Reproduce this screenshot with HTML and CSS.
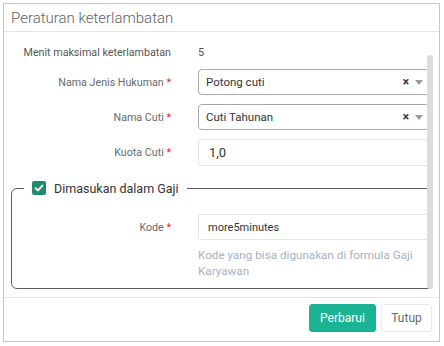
FILE: index.html
```html
<!DOCTYPE html>
<html lang="id">
<head>
    <meta charset="UTF-8">
    <meta name="viewport" content="width=device-width, initial-scale=1.0">
    <title>Peraturan keterlambatan</title>
    <link rel="stylesheet" href="styles.css">
</head>
<body>
    <div class="modal">
        <div class="modal-header">
            <h4 class="modal-title">Peraturan keterlambatan</h4>
        </div>
        <div class="modal-body">
            <div class="scroll-thumb"></div>
            <div class="form-row row-static">
                <label class="form-label">Menit maksimal keterlambatan</label>
                <div class="form-static">5</div>
            </div>
            <div class="form-row">
                <label class="form-label">Nama Jenis Hukuman <span class="req">*</span></label>
                <div class="select">
                    <span class="select-text">Potong cuti</span>
                    <span class="select-clear">&times;</span>
                    <span class="select-arrow"></span>
                </div>
            </div>
            <div class="form-row">
                <label class="form-label">Nama Cuti <span class="req">*</span></label>
                <div class="select">
                    <span class="select-text">Cuti Tahunan</span>
                    <span class="select-clear">&times;</span>
                    <span class="select-arrow"></span>
                </div>
            </div>
            <div class="form-row">
                <label class="form-label">Kuota Cuti <span class="req">*</span></label>
                <input type="text" class="form-control quota" value="1,0">
            </div>

            <fieldset class="group">
                <legend class="group-legend">
                    <span class="check">
                        <svg width="10" height="10" viewBox="0 0 10 10"><path d="M1.6 5.2 L4 7.4 L8.4 2.6" fill="none" stroke="#fff" stroke-width="1.9" stroke-linecap="round" stroke-linejoin="round"/></svg>
                    </span>
                    Dimasukan dalam Gaji
                </legend>
                <div class="form-row">
                    <label class="form-label">Kode <span class="req">*</span></label>
                    <input type="text" class="form-control code" value="more5minutes">
                </div>
                <p class="help">Kode yang bisa digunakan di formula Gaji Karyawan</p>
            </fieldset>
        </div>
        <div class="modal-footer">
            <button class="btn btn-primary">Perbarui</button>
            <button class="btn btn-white">Tutup</button>
        </div>
    </div>
</body>
</html>
```

FILE: styles.css
```css
body {
    margin: 3px;
    font-family: Roboto, "Liberation Sans", sans-serif;
    font-size: 11px;
    color: #676a6c;
    background-color: #fff;
}
.modal {
    width: 435px;
    height: 337px;
    border: 1px solid #c6c6c6;
    display: flex;
    flex-direction: column;
}
.modal-header {
    height: 28px;
    border-bottom: 1px solid #e5e5e5;
    padding: 0 7px;
    display: flex;
    align-items: center;
}
.modal-title {
    margin: 0;
    font-size: 15px;
    font-weight: 300;
    color: #5f6163;
}
.modal-body {
    position: relative;
    flex: 1;
    padding: 8px 6px 8px 7px;
}
.scroll-thumb {
    position: absolute;
    top: 23px;
    right: 6px;
    width: 6px;
    height: 234px;
    background-color: #dcdcdc;
    border-radius: 3px;
    z-index: 2;
}
.form-row {
    display: grid;
    grid-template-columns: 160px 234px;
    column-gap: 27px;
    align-items: center;
    margin-bottom: 9px;
}
.row-static {
    height: 24px;
    margin-bottom: 5px;
}
.form-label {
    text-align: right;
    white-space: nowrap;
    font-size: 10.7px;
    color: #676a6c;
}
.row-static .form-label {
    color: #555;
}
.req {
    color: #ed1c24;
}
.form-static {
    color: #555;
}
.select {
    box-sizing: border-box;
    height: 26px;
    border: 1px solid #aaa;
    border-radius: 4px;
    display: flex;
    align-items: center;
    padding: 0 8px 0 7px;
    font-size: 11.5px;
    color: #333;
}
.select-text {
    flex: 1;
}
.select-clear {
    font-weight: 700;
    font-size: 12px;
    color: #333;
    margin-right: 6px;
}
.select-arrow {
    width: 0;
    height: 0;
    border-left: 4px solid transparent;
    border-right: 4px solid transparent;
    border-top: 5px solid #999;
}
.form-control {
    box-sizing: border-box;
    height: 26px;
    border: 1px solid #e5e6e7;
    border-radius: 2px;
    font-family: inherit;
    color: #333;
    outline: none;
}
.quota {
    width: 235px;
    height: 27px;
    padding: 0 10px;
    font-size: 13px;
}
.group {
    margin: 14px 0 0;
    padding: 0 1px 9px 0;
    border: 1px solid #5f5f5f;
    border-radius: 6px;
    min-width: 0;
}
.group-legend {
    margin-left: 12px;
    padding: 0 8px;
    display: flex;
    align-items: center;
    gap: 8px;
    font-size: 12.5px;
    color: #333;
    height: 16px;
}
.check {
    width: 14px;
    height: 14px;
    border-radius: 2px;
    background-color: #238a6f;
    display: flex;
    align-items: center;
    justify-content: center;
}
.group .form-row {
    grid-template-columns: 159px 232px;
    margin: 18px 0 0;
}
.code {
    width: 232px;
    padding: 0 9px;
    font-size: 11px;
}
.help {
    margin: 7px 0 0 186px;
    width: 232px;
    line-height: 16px;
    font-size: 11.7px;
    color: #a7b1c2;
}
.modal-footer {
    border-top: 1px solid #e5e5e5;
    padding: 6px 7px 9px;
    display: flex;
    justify-content: flex-end;
    gap: 5px;
}
.btn {
    height: 28px;
    padding: 0;
    font-family: inherit;
    font-size: 12px;
    border-radius: 3px;
    cursor: pointer;
}
.btn-primary {
    width: 67px;
    background-color: #1ab394;
    border: 1px solid #1ab394;
    color: #fff;
}
.btn-white {
    width: 51px;
    background-color: #fff;
    border: 1px solid #e7eaec;
    color: #676a6c;
}
```
